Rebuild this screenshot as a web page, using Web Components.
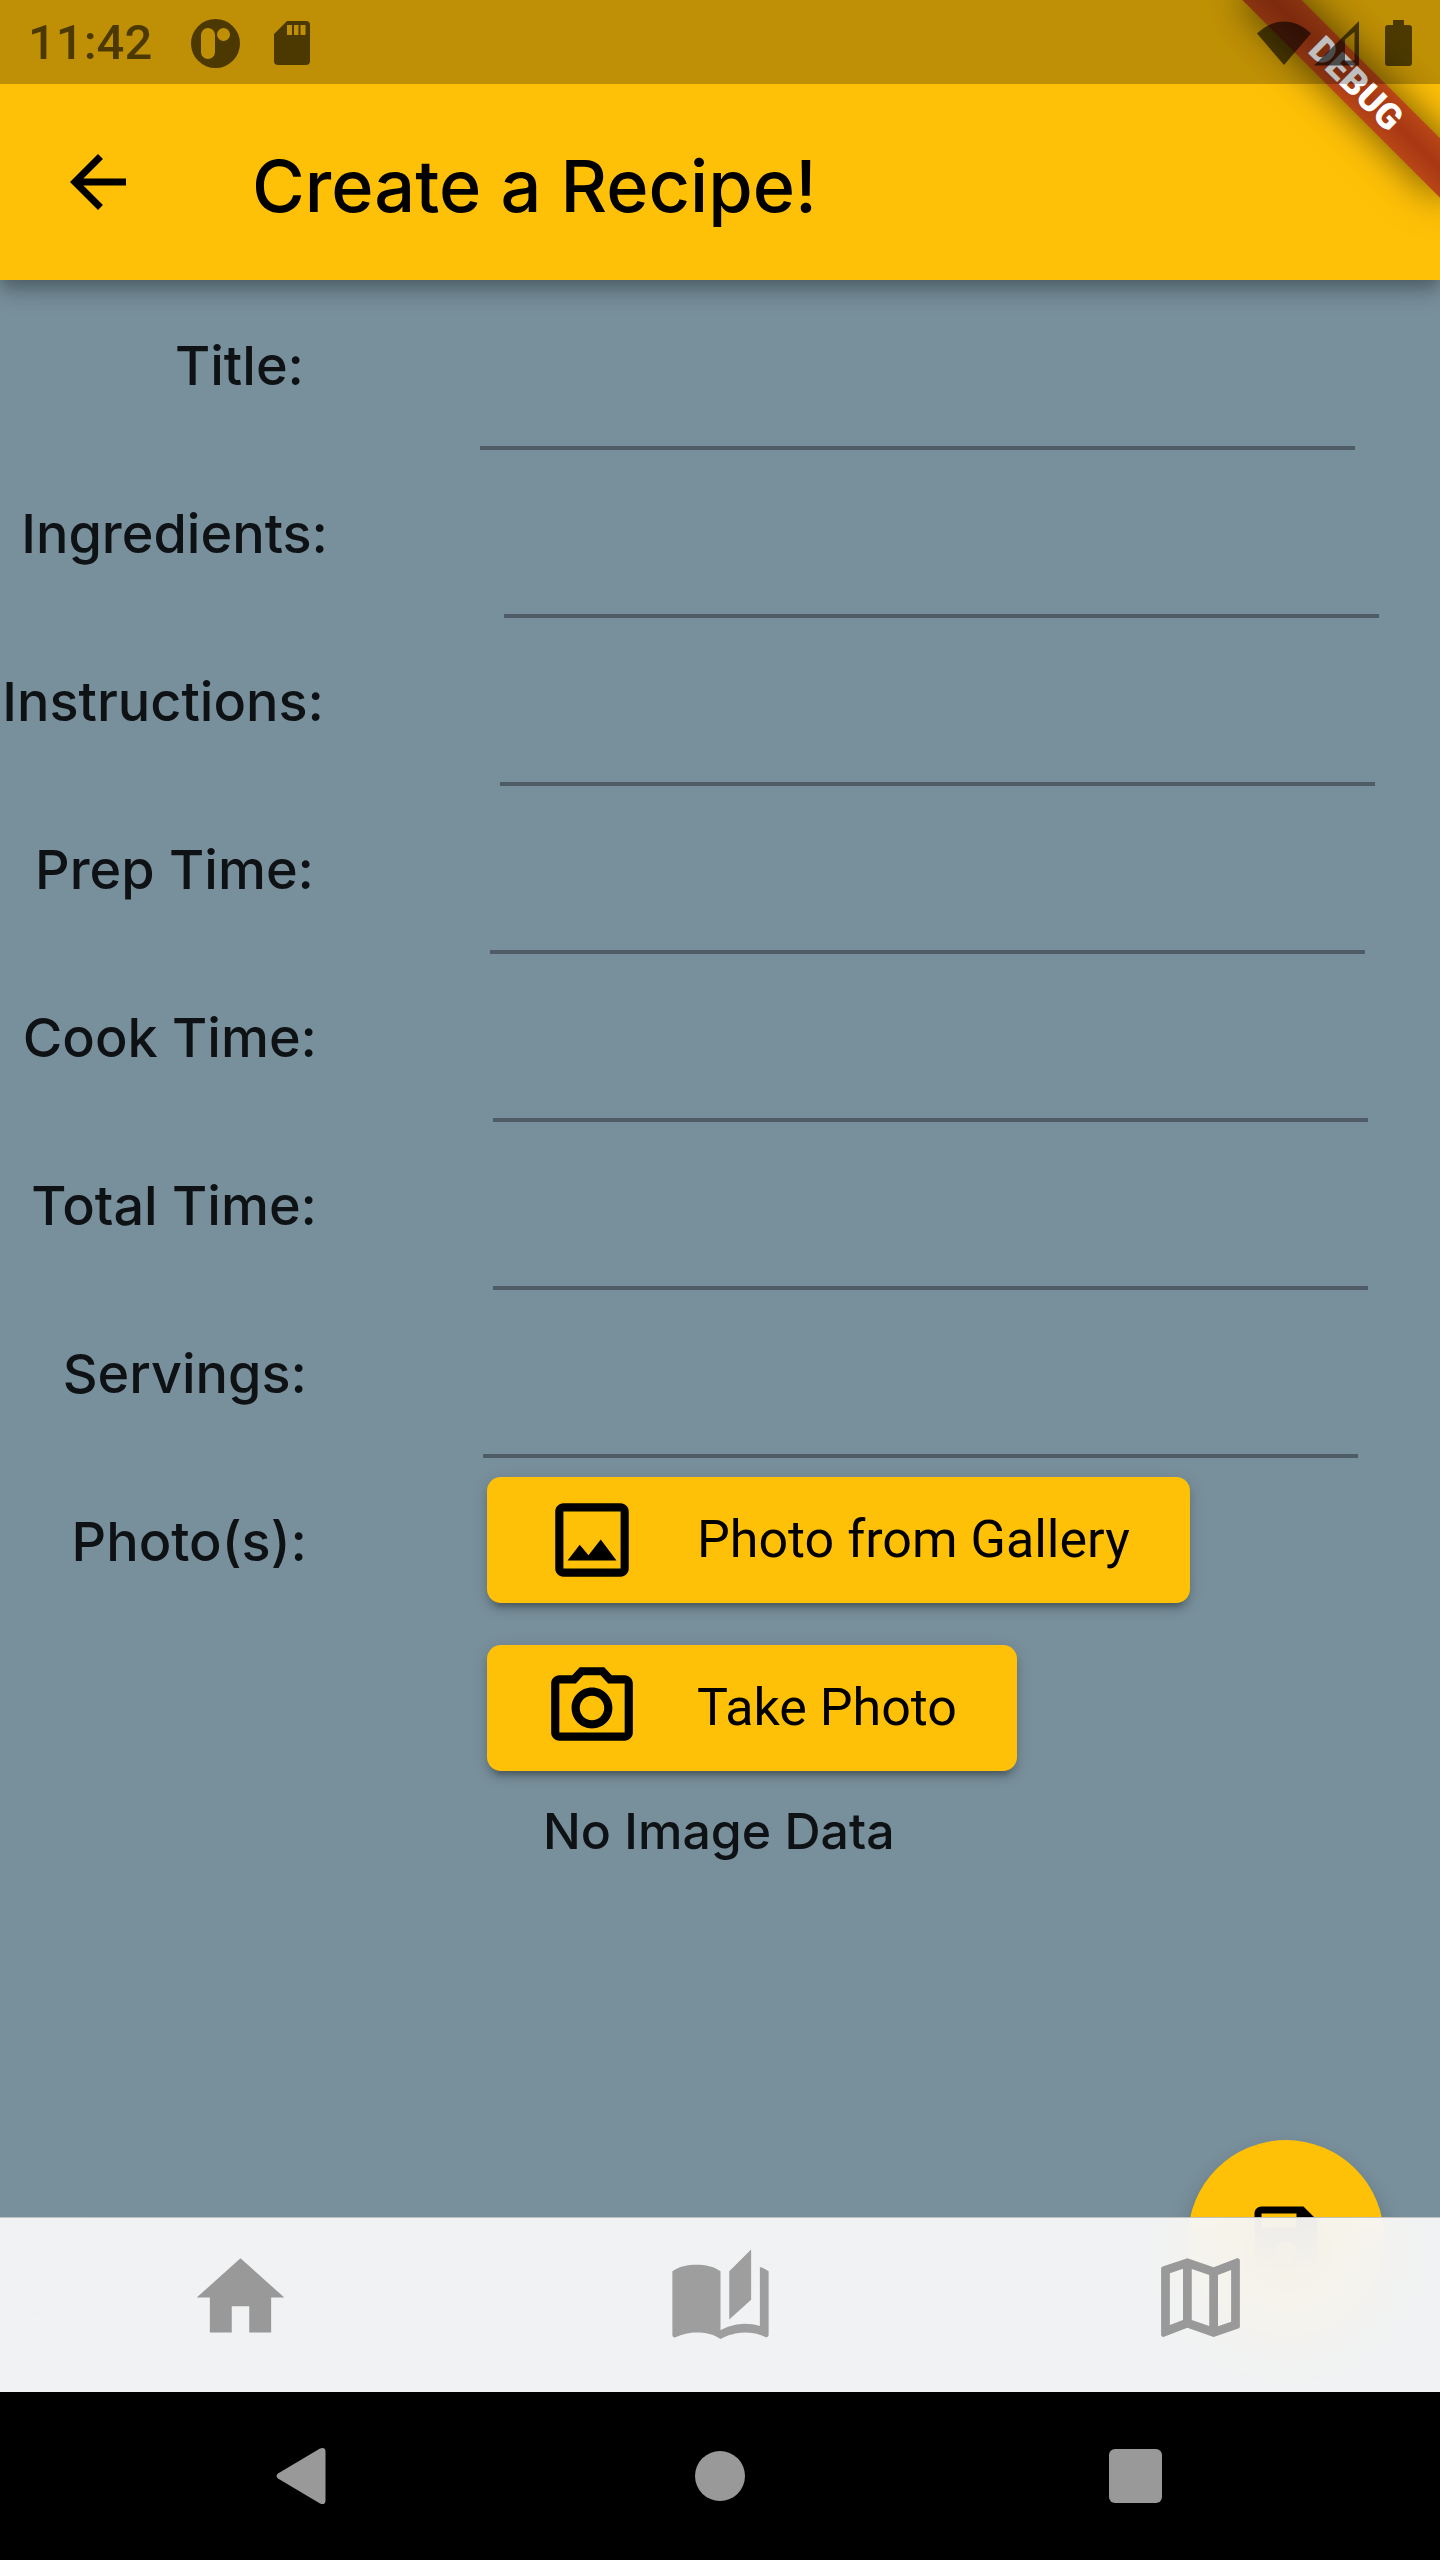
<!DOCTYPE html>
<html lang="en">
<head>
<meta charset="utf-8">
<meta name="viewport" content="width=device-width, initial-scale=1">
<title>Create a Recipe!</title>
<style>
  html, body { margin: 0; height: 100%; }
  body { font-family: Inter, "Liberation Sans", sans-serif; background: #78909c; color: #0f1214; }
</style>
</head>
<body>
<recipe-app></recipe-app>

<script>
const icons = {
  back: 'M20 11H7.83l5.59-5.59L12 4l-8 8 8 8 1.41-1.41L7.83 13H20v-2z',
  photo: 'M19 5v14H5V5h14m0-2H5c-1.1 0-2 .9-2 2v14c0 1.1.9 2 2 2h14c1.1 0 2-.9 2-2V5c0-1.1-.9-2-2-2zm-4.86 8.86l-3 3.87L9 13.14 6 17h12l-3.86-5.14z',
  camera: 'M14.12 4l1.83 2H20v12H4V6h4.05l1.83-2h4.24M15 2H9L7.17 4H4c-1.1 0-2 .9-2 2v12c0 1.1.9 2 2 2h16c1.1 0 2-.9 2-2V6c0-1.1-.9-2-2-2h-3.17L15 2zm-3 7c1.65 0 3 1.35 3 3s-1.35 3-3 3-3-1.35-3-3 1.35-3 3-3m0-2c-2.76 0-5 2.24-5 5s2.24 5 5 5 5-2.24 5-5-2.24-5-5-5z',
  save: 'M17 3H5c-1.11 0-2 .9-2 2v14c0 1.1.89 2 2 2h14c1.1 0 2-.9 2-2V7l-4-4zm-5 16c-1.66 0-3-1.34-3-3s1.34-3 3-3 3 1.34 3 3-1.34 3-3 3zm3-10H5V5h10v4z',
  home: 'M10 20v-6h4v6h5v-8h3L12 3 2 12h3v8z',
  book: 'M19 1l-5 5v11l5-4.5V1zM1 6v14.65c0 .25.25.5.5.5.1 0 .15-.05.25-.05C3.1 20.45 5.05 20 6.5 20c1.95 0 4.05.4 5.5 1.5V6c-1.45-1.1-3.55-1.5-5.5-1.5S2.45 4.9 1 6zm22 13.5V6c-.6-.45-1.25-.75-2-1v13.5c-1.1-.35-2.3-.5-3.5-.5-1.7 0-4.15.65-5.5 1.5v2c1.35-.85 3.8-1.5 5.5-1.5 1.65 0 3.35.3 4.75 1.05.1.05.15.05.25.05.25 0 .5-.25.5-.5v-1.1z',
  map: 'M20.5 3l-.16.03L15 5.1 9 3 3.36 4.9c-.21.07-.36.25-.36.48V20.5c0 .28.22.5.5.5l.16-.03L9 18.9l6 2.1 5.64-1.9c.21-.07.36-.25.36-.48V3.5c0-.28-.22-.5-.5-.5zM10 5.47l4 1.4v11.66l-4-1.4V5.47zm-5 .99l3-1.01v11.7l-3 1.16V6.46zm14 11.08l-3 1.01V6.86l3-1.16v11.84z'
};

const define = (name, render) => customElements.define(name, class extends HTMLElement {
  connectedCallback() {
    if (this.shadowRoot) return;
    this.attachShadow({ mode: 'open' }).innerHTML = render(this);
  }
});

/* Material glyph on a 24-unit grid; its size comes from --size. */
define('md-icon', el => `
  <style>
    :host { display: block; flex: none; width: var(--size, 84px); height: var(--size, 84px); }
    svg { display: block; width: 100%; height: 100%; fill: currentColor; }
  </style>
  <svg viewBox="0 0 24 24" aria-hidden="true"><path d="${icons[el.getAttribute('name')]}"/></svg>`);

define('status-bar', () => `
  <style>
    :host { display: flex; align-items: center; height: 84px; padding: 2px 28px 0; box-sizing: border-box;
            background: rgba(0,0,0,.25); color: rgba(0,0,0,.6); }
    time { font: 500 49px/56px Roboto, sans-serif; margin-right: 39px; }
    svg { display: block; fill: currentColor; flex: none; }
    .left, .right { display: flex; align-items: center; }
    .left { gap: 34px; flex: 1; }
  </style>
  <time>11:42</time>
  <div class="left">
    <svg width="49" height="49" viewBox="0 0 49 49" fill-rule="evenodd"><path d="M24.500 0a24.500 24.500 0 1 1 0 49a24.500 24.500 0 1 1 0-49zM17 9a7 7 0 0 0-7 7v17a7 7 0 0 0 14 0V16a7 7 0 0 0-7-7zM32.500 9a6.500 6.500 0 1 0 0 13a6.500 6.500 0 1 0 0-13z"/></svg>
    <svg width="36" height="44" viewBox="0 0 36 44" fill-rule="evenodd"><path d="M13 0H32a4 4 0 0 1 4 4V40a4 4 0 0 1-4 4H4a4 4 0 0 1-4-4V13zM13 4v10h5V4zM20 4v10h4.500V4zM26.500 4v10h5V4z"/></svg>
  </div>
  <div class="right">
    <svg width="54" height="46" viewBox="0 0 54 46"><path d="M0 13.500C16-2.500 38-2.500 54 13.500L27 45z"/></svg>
    <svg width="74" height="46" viewBox="0 0 74 46" fill-rule="evenodd"><path d="M3 45.500L48 1v44.500zM34 19.500V40.500H43.500V12z"/></svg>
    <svg width="27" height="46" viewBox="0 0 27 46"><path d="M8 0H19V5H24a3 3 0 0 1 3 3V43a3 3 0 0 1-3 3H3a3 3 0 0 1-3-3V8a3 3 0 0 1 3-3H8z"/></svg>
  </div>`);

define('debug-banner', () => `
  <style>
    :host { position: absolute; inset: 0; overflow: hidden; pointer-events: none; }
    span { position: absolute; top: 63px; right: -56px; width: 280px; height: 42px; transform: rotate(45deg);
           text-align: center; color: #fff; font: 900 36px/42px Roboto, sans-serif;
           background: linear-gradient(#b84617, #a73812 50%, #b84617);
           box-shadow: 0 0 42px rgba(0,0,0,.6); }
  </style>
  <span><slot></slot></span>`);

define('app-bar', () => `
  <style>
    :host { display: flex; align-items: center; height: 196px; padding: 0 56px; gap: 112px; color: #000; }
    a { color: inherit; display: block; }
    h1 { margin: 0; padding-top: 8px; font-size: 72px; line-height: 84px; font-weight: 500; }
  </style>
  <a href="#back" aria-label="Back"><md-icon name="back"></md-icon></a>
  <h1><slot></slot></h1>`);

/* Labelled text row. "shift" moves the field and its label to the right together. */
define('form-row', el => `
  <style>
    :host { --shift: ${el.getAttribute('shift')}px;
            display: grid; grid-template-columns: calc(304px + var(--shift)) 1fr; column-gap: 176px;
            height: 168px; box-sizing: border-box; padding-right: calc(85px - var(--shift)); }
    label { justify-self: end; align-self: center; white-space: nowrap; font-size: 54px; line-height: 64px; font-weight: 500; }
    input { min-width: 0; border: 0; border-bottom: 4px solid rgba(0,0,0,.35); outline: 0; padding: 0;
            background: none; color: inherit; font: 54px/64px Inter, sans-serif; }
  </style>
  <label for="field">${el.getAttribute('label')}</label>
  <input id="field" type="text">`);

define('icon-button', el => `
  <style>
    :host { display: block; --size: 98px; }
    button { display: flex; align-items: center; gap: 56px; height: 126px; padding: 0 60px 0 56px; border: 0;
             border-radius: 14px; background: #ffc107; color: #000; font: 400 52px/64px Roboto, sans-serif;
             box-shadow: 0 10px 4px -7px rgba(0,0,0,.2), 0 7px 7px rgba(0,0,0,.14), 0 3px 17px rgba(0,0,0,.12); }
  </style>
  <button type="button"><md-icon name="${el.getAttribute('icon')}"></md-icon><slot></slot></button>`);

define('photo-row', () => `
  <style>
    :host { display: grid; grid-template-columns: 307px 1fr; column-gap: 180px; align-items: start; }
    .name { justify-self: end; font-size: 54px; line-height: 64px; font-weight: 500; padding: 52px 0; }
    .pick { display: flex; flex-direction: column; align-items: flex-start; gap: 42px; padding-top: 19px; }
    p { margin: -14px 0 0; padding-left: 56px; font-size: 50px; line-height: 64px; font-weight: 500; }
  </style>
  <div class="name" id="name">Photo(s):</div>
  <div class="pick" role="group" aria-labelledby="name">
    <icon-button icon="photo">Photo from Gallery</icon-button>
    <icon-button icon="camera">Take Photo</icon-button>
    <p>No Image Data</p>
  </div>`);

define('save-fab', () => `
  <style>
    :host { display: block; }
    button { display: grid; place-items: center; width: 196px; height: 196px; padding: 0; border: 0; border-radius: 50%;
             background: #ffc107; color: #000;
             box-shadow: 0 10px 18px -3px rgba(0,0,0,.2), 0 14px 28px rgba(0,0,0,.12); }
  </style>
  <button type="button" aria-label="Save"><md-icon name="save"></md-icon></button>`);

define('tab-bar', () => `
  <style>
    :host { display: grid; grid-template-columns: repeat(3, 1fr); justify-items: center; align-items: start;
            height: 175px; box-sizing: border-box; padding-top: 27px; --size: 105px;
            border-top: 1px solid rgba(0,0,0,.2);
            background: rgba(248,248,249,.94); -webkit-backdrop-filter: blur(35px); backdrop-filter: blur(35px); }
    a { color: #999; }
    a.on { color: #9e9e9e; }
  </style>
  <a href="#home" aria-label="Home"><md-icon name="home"></md-icon></a>
  <a href="#recipes" aria-label="Recipes" class="on"><md-icon name="book"></md-icon></a>
  <a href="#map" aria-label="Map"><md-icon name="map"></md-icon></a>`);

define('system-nav', () => `
  <style>
    :host { display: grid; grid-template-columns: repeat(3, 1fr); padding: 0 97px; height: 168px; background: #000; }
    button { display: grid; place-items: center; border: 0; padding: 0; background: none; }
    svg { display: block; fill: #999; }
  </style>
  <button type="button" aria-label="Back"><svg width="58" height="58" viewBox="0 0 58 58"><path d="M2 26.500Q-1 29 2 31.500L44 56.500Q49 58.500 49.500 54V4Q49 -.5 44 1.500z"/></svg></button>
  <button type="button" aria-label="Home"><svg width="50" height="50" viewBox="0 0 50 50"><circle cx="25" cy="25" r="25"/></svg></button>
  <button type="button" aria-label="Overview"><svg width="53" height="54" viewBox="0 0 53 54"><rect width="53" height="54" rx="6"/></svg></button>`);

define('recipe-app', () => `
  <style>
    :host { display: flex; flex-direction: column; min-height: 100%; background: #78909c; overflow: hidden; }
    header { position: relative; z-index: 1; background: #ffc107;
             box-shadow: 0 7px 14px -3px rgba(0,0,0,.2), 0 14px 17px rgba(0,0,0,.14), 0 3px 35px rgba(0,0,0,.12); }
    status-bar { position: relative; z-index: 2; }
    main { position: relative; flex: 1; padding-top: 2px; }
    save-fab { position: absolute; right: 56px; bottom: -119px; }
    tab-bar { position: relative; }
    system-nav { position: relative; }
  </style>
  <header>
    <status-bar></status-bar>
    <app-bar>Create a Recipe!</app-bar>
    <debug-banner>DEBUG</debug-banner>
  </header>
  <main>
    <form-row label="Title:" shift="0"></form-row>
    <form-row label="Ingredients:" shift="24"></form-row>
    <form-row label="Instructions:" shift="20"></form-row>
    <form-row label="Prep Time:" shift="10"></form-row>
    <form-row label="Cook Time:" shift="13"></form-row>
    <form-row label="Total Time:" shift="13"></form-row>
    <form-row label="Servings:" shift="3"></form-row>
    <photo-row></photo-row>
    <save-fab></save-fab>
  </main>
  <tab-bar></tab-bar>
  <system-nav></system-nav>`);
</script>
</body>
</html>
